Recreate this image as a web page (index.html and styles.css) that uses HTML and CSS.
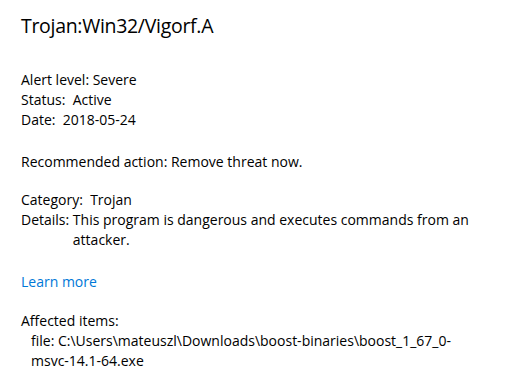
FILE: index.html
```html
<!DOCTYPE html>
<html>
<head>
<meta charset="utf-8">
<link rel="stylesheet" href="styles.css">
</head>
<body>
<div class="page">
  <h1 class="title">Trojan:Win32/Vigorf.A</h1>
  <div class="group g-alert">
    <div class="line">Alert level: Severe</div>
    <div class="line">Status:&nbsp; Active</div>
    <div class="line">Date:&nbsp; 2018-05-24</div>
  </div>
  <div class="group g-action">
    <div class="line">Recommended action: Remove threat now.</div>
  </div>
  <div class="group g-details">
    <div class="line">Category:&nbsp; Trojan</div>
    <div class="row">
      <span class="label">Details:&nbsp;</span>
      <span class="value">This program is dangerous and executes commands from an attacker.</span>
    </div>
  </div>
  <div class="group g-link">
    <a class="link" href="#">Learn more</a>
  </div>
  <div class="group g-items">
    <div class="line">Affected items:</div>
    <div class="item">file: C:\Users\mateuszl\Downloads\boost-binaries\boost_1_67_0-msvc-14.1-64.exe</div>
  </div>
</div>
</body>
</html>
```
FILE: styles.css
```css
html, body {
  margin: 0;
  padding: 0;
  background: #ffffff;
}
.page {
  padding: 12px 0 0 21px;
  width: 460px;
  font-family: "Open Sans", "Noto Sans", sans-serif;
  font-size: 14px;
  line-height: 20px;
  color: #000000;
}
.title {
  margin: 0;
  font-size: 19.5px;
  font-weight: 400;
  line-height: 28px;
  letter-spacing: -0.3px;
}
.g-alert {
  margin-top: 30px;
}
.g-action {
  margin-top: 22px;
}
.g-details {
  margin-top: 18px;
}
.g-link {
  margin-top: 22px;
}
.g-items {
  margin-top: 19px;
}
.row {
  display: flex;
}
.label {
  flex: none;
}
.value {
  flex: 1;
}
.link {
  color: #0078d7;
  text-decoration: none;
}
.item {
  padding-left: 10px;
}
```
